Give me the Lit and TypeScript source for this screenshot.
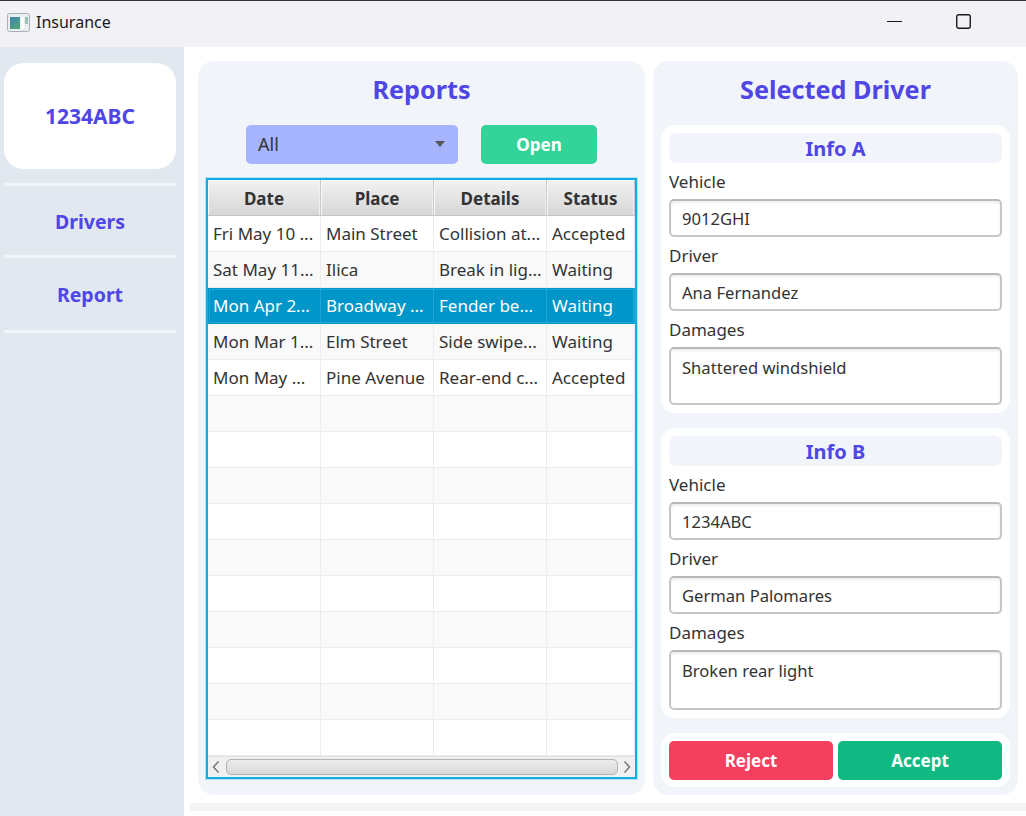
import { LitElement, html, css } from 'lit'
import { customElement } from 'lit/decorators.js'

const reports = [
  ['Fri May 10 ...', 'Main Street', 'Collision at...', 'Accepted'],
  ['Sat May 11...', 'Ilica', 'Break in lig...', 'Waiting'],
  ['Mon Apr 2...', 'Broadway ...', 'Fender be...', 'Waiting'],
  ['Mon Mar 1...', 'Elm Street', 'Side swipe...', 'Waiting'],
  ['Mon May ...', 'Pine Avenue', 'Rear-end c...', 'Accepted'],
  ['', '', '', ''], ['', '', '', ''], ['', '', '', ''], ['', '', '', ''], ['', '', '', ''],
  ['', '', '', ''], ['', '', '', ''], ['', '', '', ''], ['', '', '', ''], ['', '', '', '']
]

const infos = [
  { title: 'Info A', vehicle: '9012GHI', driver: 'Ana Fernandez', damages: 'Shattered windshield' },
  { title: 'Info B', vehicle: '1234ABC', driver: 'German Palomares', damages: 'Broken rear light' }
]

@customElement('app-root')
export class AppRoot extends LitElement {
  static styles = [
    css`
      :host {
        display: flex;
        flex-direction: column;
        width: 1026px;
        height: 816px;
        overflow: hidden;
        background: #ffffff;
        color: #333333;
        font-family: "Noto Sans", "Open Sans", sans-serif;
      }

      * { box-sizing: border-box; }

      .titlebar {
        display: flex;
        align-items: center;
        flex: none;
        height: 47px;
        padding: 0 0 5px 7px;
        border-top: 1px solid #333333;
        background: #f2f2f6;
        font-size: 16px;
        color: #1a1a1a;
      }

      .app-icon { margin-right: 6px; margin-top: 1px; }

      .window-buttons {
        display: flex;
        align-items: center;
        gap: 54px;
        margin-left: auto;
        margin-right: 55px;
      }

      .body {
        display: flex;
        flex: 1;
        min-height: 0;
      }

      .sidebar {
        display: flex;
        flex-direction: column;
        flex: none;
        width: 184px;
        padding: 16px 8px 0 4px;
        background: #e2e8f0;
      }

      .plate {
        display: flex;
        align-items: center;
        justify-content: center;
        height: 106px;
        margin-bottom: 14px;
        border-radius: 20px;
        background: #ffffff;
        color: #4f46e5;
        font-size: 21px;
        font-weight: 700;
      }

      .nav {
        display: flex;
        align-items: center;
        justify-content: center;
        height: 72px;
        padding-top: 2px;
        border-top: 3px solid #f1f5f9;
        color: #4f46e5;
        font-size: 19.5px;
        font-weight: 700;
      }

      .nav.last { height: 78px; padding-top: 0; border-bottom: 3px solid #f1f5f9; }

      .content {
        display: flex;
        flex-direction: column;
        flex: 1;
        min-width: 0;
      }

      .panels {
        display: flex;
        gap: 8px;
        height: 748px;
        padding: 14px 8px 0 14px;
      }

      .strip {
        height: 8px;
        margin: 8px 0 0 6px;
        background: #f3f3f3;
      }

      .panel {
        display: flex;
        flex-direction: column;
        border-radius: 16px;
        background: #f1f5f9;
      }

      .reports { width: 447px; padding: 0 8px 16px; }
      .selected { width: 365px; padding: 0 8px 8px; }

      h1 {
        margin: 0;
        height: 64px;
        line-height: 57px;
        text-align: center;
        color: #4f46e5;
        font-size: 25.2px;
        font-weight: 700;
      }

      .toolbar {
        display: flex;
        gap: 23px;
        height: 39px;
        margin: 0 0 14px 40px;
      }

      .combo {
        display: flex;
        align-items: center;
        justify-content: space-between;
        width: 212px;
        padding: 0 13px 2px 12px;
        border-radius: 5px;
        background: #a5b4fc;
        font-size: 18px;
      }

      .combo i {
        width: 0;
        height: 0;
        border-left: 5px solid transparent;
        border-right: 5px solid transparent;
        border-top: 6px solid #555555;
      }

      .btn {
        display: flex;
        align-items: center;
        justify-content: center;
        padding-bottom: 1px;
        border-radius: 5px;
        color: #ffffff;
        font-size: 17px;
        font-weight: 700;
      }

      .open { width: 116px; background: #34d399; }
      .reject { flex: 1; background: #f43f5e; }
      .accept { flex: 1; background: #10b981; }

      .table {
        display: flex;
        flex-direction: column;
        height: 601px;
        border: 2px solid #10ade0;
        box-shadow: 0 0 0 1px #b5e3f5;
        background: #ffffff;
      }

      .row {
        display: grid;
        grid-template-columns: 113px 113px 113px 1fr;
        flex: none;
        height: 36px;
        font-size: 17px;
        background: #ffffff;
      }

      .row.alt { background: #f9f9f9; }

      .row.head { font-weight: 700; }

      .row.selected-row {
        background: #0096c9;
        color: #ffffff;
        outline: 1px solid #1ea5d3;
        outline-offset: -2px;
      }

      .cell {
        display: flex;
        align-items: center;
        padding: 0 0 1px 5px;
        white-space: nowrap;
        overflow: hidden;
        border-right: 1px solid #ececec;
        border-bottom: 1px solid #ececec;
      }

      .selected-row .cell {
        border-right-color: #1ea5d3;
        border-bottom-color: #0096c9;
      }

      .head .cell {
        justify-content: center;
        padding: 2px 0 0;
        background: linear-gradient(#f2f2f2, #d6d6d6);
        border-right: 1px solid #c8c8c8;
        border-bottom: 1px solid #c4c4c4;
        box-shadow: inset 1px 1px 0 #fafafa, inset -1px 0 0 #f0f0f0;
      }

      .scrollbar {
        display: flex;
        align-items: center;
        justify-content: space-between;
        flex: none;
        height: 21px;
        padding: 0 4px;
        background: #f0f0f0;
        border-top: 1px solid #e0e0e0;
      }

      .thumb {
        width: 392px;
        height: 16px;
        border: 1px solid #b4b4b4;
        border-radius: 5px;
        background: linear-gradient(#ececec, #d8d8d8);
      }

      .card {
        display: flex;
        flex-direction: column;
        padding: 8px;
        border-radius: 14px;
        background: #ffffff;
      }

      .card + .card { margin-top: 15px; }

      .card h2 {
        margin: 0 0 6px;
        height: 30px;
        line-height: 31px;
        border-radius: 7px;
        background: #f1f5f9;
        text-align: center;
        color: #4f46e5;
        font-size: 20px;
        font-weight: 700;
      }

      .card label {
        display: block;
        height: 30px;
        line-height: 25px;
        font-size: 17px;
      }

      .card input, .card textarea {
        display: block;
        width: 100%;
        height: 38px;
        margin: 0 0 6px;
        padding: 0 11px;
        border: 2px solid #c6c6c6;
        border-top-color: #b8b8b8;
        border-radius: 5px;
        outline: none;
        background: #ffffff;
        box-shadow: inset 0 2px 3px rgba(0, 0, 0, 0.07);
        color: #333333;
        font: inherit;
        font-size: 16.6px;
      }

      .card textarea {
        height: 58px;
        margin: 0;
        padding: 7px 11px;
        resize: none;
        overflow: hidden;
      }

      .card.tall textarea { height: 60px; }

      .actions {
        flex-direction: row;
        gap: 5px;
        height: 54px;
        padding-bottom: 7px;
      }
    `
  ]

  renderInfo (info: typeof infos[number], i: number) {
    return html`
      <section class="card ${i === 1 ? 'tall' : ''}">
        <h2>${info.title}</h2>
        <label>Vehicle</label>
        <input readonly .value=${info.vehicle}>
        <label>Driver</label>
        <input readonly .value=${info.driver}>
        <label>Damages</label>
        <textarea readonly .value=${info.damages}></textarea>
      </section>
    `
  }

  render () {
    return html`
      <div class="titlebar">
        <svg class="app-icon" width="23" height="19" viewBox="0 0 23 19">
          <defs>
            <linearGradient id="pane" x1="0" y1="0" x2="0.6" y2="1">
              <stop offset="0" stop-color="#3f86b0"/>
              <stop offset="1" stop-color="#4fa37a"/>
            </linearGradient>
          </defs>
          <rect x="0.5" y="0.5" width="22" height="18" rx="2" fill="#e9edf0" stroke="#a9b1b8"/>
          <rect x="3" y="4" width="10" height="12" fill="url(#pane)"/>
          <rect x="14" y="4" width="3" height="12" fill="#fafcfc"/>
          <rect x="18" y="4" width="3" height="7" fill="#9cc2b2"/>
        </svg>
        Insurance
        <div class="window-buttons">
          <svg width="15" height="15" viewBox="0 0 15 15">
            <path d="M0 7.5H15" stroke="#1a1a1a" stroke-width="1"/>
          </svg>
          <svg width="15" height="15" viewBox="0 0 15 15">
            <rect x="0.75" y="0.75" width="13.5" height="13.5" rx="2" fill="none" stroke="#1a1a1a" stroke-width="1.4"/>
          </svg>
        </div>
      </div>
      <div class="body">
        <nav class="sidebar">
          <div class="plate">1234ABC</div>
          <div class="nav">Drivers</div>
          <div class="nav last">Report</div>
        </nav>
        <div class="content">
          <div class="panels">
            <section class="panel reports">
              <h1>Reports</h1>
              <div class="toolbar">
                <div class="combo">All<i></i></div>
                <div class="btn open">Open</div>
              </div>
              <div class="table">
                <div class="row head">
                  <div class="cell">Date</div>
                  <div class="cell">Place</div>
                  <div class="cell">Details</div>
                  <div class="cell">Status</div>
                </div>
                ${reports.map((r, i) => html`
                  <div class="row ${i % 2 ? 'alt' : ''} ${i === 2 ? 'selected-row' : ''}">
                    ${r.map(c => html`<div class="cell">${c}</div>`)}
                  </div>
                `)}
                <div class="scrollbar">
                  <svg width="8" height="14" viewBox="0 0 8 14">
                    <path d="M6.5 1.5L1.5 7L6.5 12.5" fill="none" stroke="#777777" stroke-width="1.5"/>
                  </svg>
                  <div class="thumb"></div>
                  <svg width="8" height="14" viewBox="0 0 8 14">
                    <path d="M1.5 1.5L6.5 7L1.5 12.5" fill="none" stroke="#777777" stroke-width="1.5"/>
                  </svg>
                </div>
              </div>
            </section>
            <section class="panel selected">
              <h1>Selected Driver</h1>
              ${infos.map((info, i) => this.renderInfo(info, i))}
              <section class="card actions">
                <div class="btn reject">Reject</div>
                <div class="btn accept">Accept</div>
              </section>
            </section>
          </div>
          <div class="strip"></div>
        </div>
      </div>
    `
  }
}
